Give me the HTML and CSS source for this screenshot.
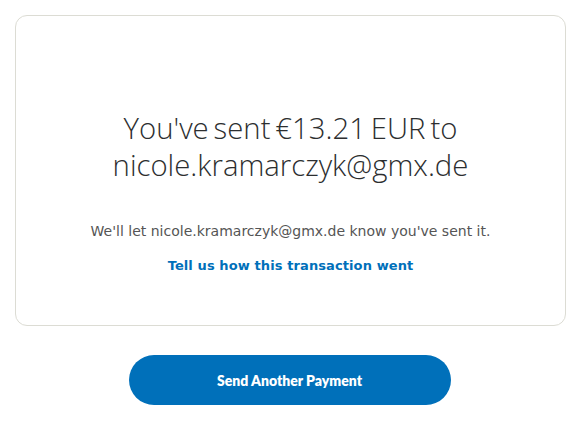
FILE: index.html
```html
<!DOCTYPE html>
<html lang="en">
<head>
<meta charset="utf-8">
<title>Payment sent</title>
<link rel="stylesheet" href="styles.css">
</head>
<body>
<main class="page">
  <section class="card">
    <h1 class="title">You've sent €13.21 EUR to<br>nicole.kramarczyk@gmx.de</h1>
    <p class="note">We'll let nicole.kramarczyk@gmx.de know you've sent it.</p>
    <a class="feedback" href="#">Tell us how this transaction went</a>
  </section>
  <div class="actions">
    <a class="btn-primary" href="#">Send Another Payment</a>
  </div>
</main>
</body>
</html>
```
FILE: styles.css
```css
html, body {
  margin: 0;
  padding: 0;
  background: #ffffff;
}
.page {
  padding: 15px 17px 0 15px;
  display: flex;
  flex-direction: column;
  align-items: stretch;
}
.card {
  height: 311px;
  box-sizing: border-box;
  padding-top: 94px;
  border: 1px solid #dcdcd4;
  border-radius: 12px;
  display: flex;
  flex-direction: column;
  align-items: center;
  text-align: center;
}
.title {
  margin: 0;
  font-family: "Open Sans", "Liberation Sans", sans-serif;
  font-weight: 300;
  font-size: 29.3px;
  word-spacing: -2.7px;
  line-height: 37px;
  color: #2c2e2f;
}
.note {
  margin: 38px 0 0;
  font-family: "DejaVu Sans", sans-serif;
  font-size: 14px;
  line-height: 18px;
  color: #555555;
}
.feedback {
  margin-top: 17px;
  font-family: "DejaVu Sans", sans-serif;
  font-weight: bold;
  font-size: 13px;
  letter-spacing: 0.1px;
  line-height: 18px;
  color: #0070ba;
  text-decoration: none;
}
.actions {
  display: flex;
  justify-content: center;
  padding-top: 29px;
  padding-right: 2px;
}
.btn-primary {
  width: 322px;
  height: 50px;
  border-radius: 25px;
  background: #0070ba;
  color: #fff;
  display: flex;
  align-items: center;
  justify-content: center;
  font-family: "Lato", "DejaVu Sans", sans-serif;
  font-weight: 800;
  font-size: 14px;
  text-decoration: none;
}
```
